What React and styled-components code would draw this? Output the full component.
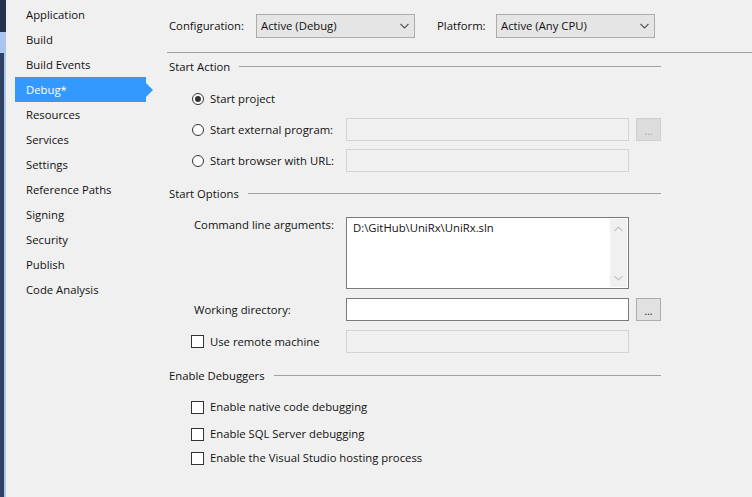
import React from "react";
import styled, { createGlobalStyle, css } from "styled-components";

const GlobalStyle = createGlobalStyle`
    html, body {
        margin: 0;
        padding: 0;
        background: #f0f0f0;
    }
    body {
        font-family: "Open Sans", "Noto Sans", sans-serif;
        font-size: 11.3px;
        color: #111;
    }
`;

const navItems = [
    "Application",
    "Build",
    "Build Events",
    "Debug*",
    "Resources",
    "Services",
    "Settings",
    "Reference Paths",
    "Signing",
    "Security",
    "Publish",
    "Code Analysis",
];

const Chevron = ({ up, color = "#555" }) => (
    <svg width="9" height="6" viewBox="0 0 9 6">
        <path
            d={up ? "M0.5 5 L4.5 1 L8.5 5" : "M0.5 1 L4.5 5 L8.5 1"}
            fill="none"
            stroke={color}
            strokeWidth="1.1"
        />
    </svg>
);

const App = () => {
    return (
        <>
            <GlobalStyle />
            <Window>
                <Sidebar>
                    <Strip />
                    <Nav>
                        {navItems.map((name) => (
                            <NavItem key={name} $active={name === "Debug*"}>
                                {name}
                            </NavItem>
                        ))}
                    </Nav>
                </Sidebar>
                <Main>
                    <ConfigBar>
                        <ConfigLabel $width={87}>Configuration:</ConfigLabel>
                        <Select>
                            <span>Active (Debug)</span>
                            <Chevron />
                        </Select>
                        <ConfigLabel $width={59}>Platform:</ConfigLabel>
                        <Select>
                            <span>Active (Any CPU)</span>
                            <Chevron />
                        </Select>
                    </ConfigBar>

                    <Content>
                        <SectionHeader $top={6}>
                            <span>Start Action</span>
                            <Rule />
                        </SectionHeader>

                        <FieldRow $top={12}>
                            <FieldLabel>
                                <Radio $checked />
                                Start project
                            </FieldLabel>
                        </FieldRow>
                        <FieldRow $top={8}>
                            <FieldLabel>
                                <Radio />
                                Start external program:
                            </FieldLabel>
                            <TextBox $disabled />
                            <BrowseButton $disabled>...</BrowseButton>
                        </FieldRow>
                        <FieldRow $top={8}>
                            <FieldLabel>
                                <Radio />
                                Start browser with URL:
                            </FieldLabel>
                            <TextBox $disabled />
                        </FieldRow>

                        <SectionHeader $top={14}>
                            <span>Start Options</span>
                            <Rule />
                        </SectionHeader>

                        <FieldRow $top={15} $height={72} $alignTop>
                            <FieldLabel $plain>Command line arguments:</FieldLabel>
                            <TextArea>
                                <AreaText>D:\GitHub\UniRx\UniRx.sln</AreaText>
                                <ScrollBar>
                                    <Chevron up color="#c4c4c4" />
                                    <Chevron color="#c4c4c4" />
                                </ScrollBar>
                            </TextArea>
                        </FieldRow>
                        <FieldRow $top={9}>
                            <FieldLabel $plain>Working directory:</FieldLabel>
                            <TextBox />
                            <BrowseButton>...</BrowseButton>
                        </FieldRow>
                        <FieldRow $top={9}>
                            <FieldLabel>
                                <CheckBox />
                                Use remote machine
                            </FieldLabel>
                            <TextBox $disabled />
                        </FieldRow>

                        <SectionHeader $top={15}>
                            <span>Enable Debuggers</span>
                            <Rule />
                        </SectionHeader>

                        <CheckRow $top={15}>
                            <CheckBox />
                            Enable native code debugging
                        </CheckRow>
                        <CheckRow $top={11}>
                            <CheckBox />
                            Enable SQL Server debugging
                        </CheckRow>
                        <CheckRow $top={8}>
                            <CheckBox />
                            Enable the Visual Studio hosting process
                        </CheckRow>
                    </Content>
                </Main>
            </Window>
        </>
    );
};

export default App;

const Window = styled.div`
    display: flex;
    width: 752px;
    height: 497px;
    overflow: hidden;
    background: #f0f0f0;
`;

const Sidebar = styled.div`
    display: flex;
    width: 167px;
    flex-shrink: 0;
`;

const Strip = styled.div`
    width: 6px;
    background:
        linear-gradient(to bottom, transparent 0 32px, #a9c6ee 32px 53px, transparent 53px),
        linear-gradient(to bottom, #233250 0 32px, transparent 32px),
        linear-gradient(to right, #2e4163 0 4px, #a9c6ee 4px 6px);
`;

const Nav = styled.ul`
    list-style: none;
    margin: 0;
    padding: 2px 0 0 9px;
    flex: 1;
`;

const NavItem = styled.li`
    position: relative;
    display: flex;
    align-items: center;
    width: 131px;
    height: 25px;
    box-sizing: border-box;
    padding-left: 11px;
    line-height: 16px;
    ${({ $active }) =>
        $active &&
        css`
            background: #3399ff;
            color: #fff;
            &::after {
                content: "";
                position: absolute;
                left: 100%;
                top: 50%;
                margin-top: -7px;
                border-left: 7px solid #3399ff;
                border-top: 7px solid transparent;
                border-bottom: 7px solid transparent;
            }
        `}
`;

const Main = styled.div`
    flex: 1;
    display: flex;
    flex-direction: column;
`;

const ConfigBar = styled.div`
    display: flex;
    align-items: center;
    height: 52px;
    padding-left: 2px;
    border-bottom: 1px solid #a0a0a0;
`;

const ConfigLabel = styled.div`
    width: ${({ $width }) => $width}px;
    flex-shrink: 0;
    line-height: 16px;
`;

const Select = styled.div`
    display: flex;
    align-items: center;
    justify-content: space-between;
    width: 159px;
    height: 24px;
    box-sizing: border-box;
    padding: 0 5px 0 4px;
    margin-right: 22px;
    background: #e5e5e5;
    border: 1px solid #acacac;
    line-height: 16px;
`;

const Content = styled.div`
    width: 494px;
    box-sizing: border-box;
    padding-left: 2px;
    display: flex;
    flex-direction: column;
`;

const SectionHeader = styled.div`
    display: flex;
    align-items: center;
    height: 16px;
    line-height: 16px;
    margin-top: ${({ $top }) => $top}px;
`;

const Rule = styled.div`
    flex: 1;
    height: 0;
    margin: -1px 0 0 9px;
    border-top: 1px solid #a0a0a0;
`;

const FieldRow = styled.div`
    display: flex;
    align-items: ${({ $alignTop }) => ($alignTop ? "flex-start" : "center")};
    height: ${({ $height }) => $height || 23}px;
    margin-top: ${({ $top }) => $top}px;
    padding-left: 22px;
`;

const FieldLabel = styled.div`
    display: flex;
    align-items: center;
    width: 155px;
    flex-shrink: 0;
    box-sizing: border-box;
    padding-left: ${({ $plain }) => ($plain ? 3 : 0)}px;
    line-height: 16px;
`;

const Radio = styled.span`
    position: relative;
    width: 12px;
    height: 12px;
    box-sizing: border-box;
    margin: 0 6px 0 1px;
    border: 1px solid #333;
    border-radius: 50%;
    background: #fff;
    flex-shrink: 0;
    ${({ $checked }) =>
        $checked &&
        css`
            &::after {
                content: "";
                position: absolute;
                left: 2px;
                top: 2px;
                width: 6px;
                height: 6px;
                border-radius: 50%;
                background: #333;
            }
        `}
`;

const CheckBox = styled.span`
    width: 13px;
    height: 13px;
    box-sizing: border-box;
    margin-right: 6px;
    border: 1px solid #333;
    background: #fff;
    flex-shrink: 0;
`;

const TextBox = styled.div`
    width: 283px;
    height: 23px;
    box-sizing: border-box;
    flex-shrink: 0;
    ${({ $disabled }) =>
        $disabled
            ? css`
                  background: #f0f0f0;
                  border: 1px solid #d4d4d4;
              `
            : css`
                  background: #fff;
                  border: 1px solid #7a7a7a;
              `}
`;

const BrowseButton = styled.div`
    display: flex;
    align-items: center;
    justify-content: center;
    width: 25px;
    height: 23px;
    box-sizing: border-box;
    margin-left: 7px;
    padding-top: 2px;
    font-size: 10px;
    ${({ $disabled }) =>
        $disabled
            ? css`
                  background: #dcdcdc;
                  border: 1px solid #cfcfcf;
                  color: #a6a6a6;
              `
            : css`
                  background: #e1e1e1;
                  border: 1px solid #adadad;
                  color: #111;
              `}
`;

const TextArea = styled.div`
    display: flex;
    width: 283px;
    height: 72px;
    box-sizing: border-box;
    padding: 1px;
    background: #fff;
    border: 1px solid #7a7a7a;
`;

const AreaText = styled.div`
    flex: 1;
    padding: 1px 0 0 5px;
    line-height: 16px;
`;

const ScrollBar = styled.div`
    display: flex;
    flex-direction: column;
    align-items: center;
    justify-content: space-between;
    width: 17px;
    padding: 7px 0 6px;
    box-sizing: border-box;
    background: #f0f0f0;
`;

const CheckRow = styled.div`
    display: flex;
    align-items: center;
    height: 16px;
    line-height: 16px;
    margin-top: ${({ $top }) => $top}px;
    padding-left: 22px;
`;
